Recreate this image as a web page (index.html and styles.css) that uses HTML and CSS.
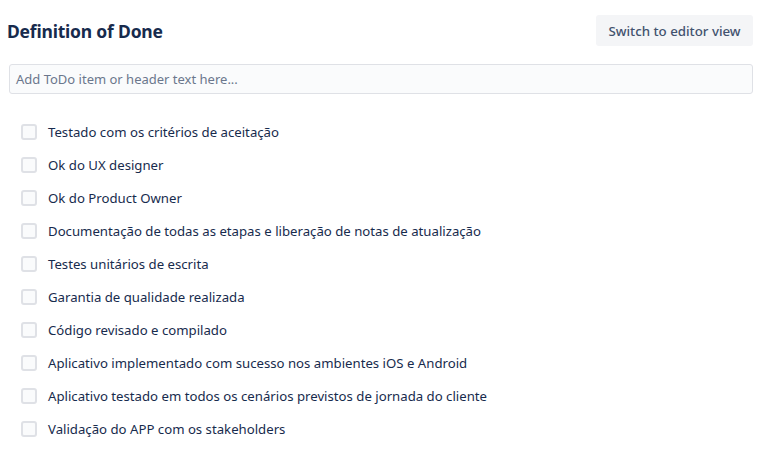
FILE: index.html
```html
<!DOCTYPE html>
<html>
<head>
<meta charset="utf-8">
<link rel="stylesheet" href="styles.css">
</head>
<body>
<div class="page">
  <div class="header">
    <h1 class="title">Definition of Done</h1>
    <button class="switch-btn">Switch to editor view</button>
  </div>
  <div class="add-input">Add ToDo item or header text here...</div>
  <ul class="todo-list">
    <li class="todo"><span class="box"></span><span class="label">Testado com os critérios de aceitação</span></li>
    <li class="todo"><span class="box"></span><span class="label">Ok do UX designer</span></li>
    <li class="todo"><span class="box"></span><span class="label">Ok do Product Owner</span></li>
    <li class="todo"><span class="box"></span><span class="label">Documentação de todas as etapas e liberação de notas de atualização</span></li>
    <li class="todo"><span class="box"></span><span class="label">Testes unitários de escrita</span></li>
    <li class="todo"><span class="box"></span><span class="label">Garantia de qualidade realizada</span></li>
    <li class="todo"><span class="box"></span><span class="label">Código revisado e compilado</span></li>
    <li class="todo"><span class="box"></span><span class="label">Aplicativo implementado com sucesso nos ambientes iOS e Android</span></li>
    <li class="todo"><span class="box"></span><span class="label">Aplicativo testado em todos os cenários previstos de jornada do cliente</span></li>
    <li class="todo"><span class="box"></span><span class="label">Validação do APP com os stakeholders</span></li>
  </ul>
</div>
</body>
</html>
```

FILE: styles.css
```css
html, body {
  margin: 0;
  padding: 0;
  background: #ffffff;
}
body {
  font-family: "Noto Sans", "Open Sans", sans-serif;
  color: #172b4d;
}
.page {
  padding: 15px 22px 0 7px;
}
.header {
  display: flex;
  justify-content: space-between;
  align-items: center;
  height: 31px;
}
.title {
  margin: 0;
  font-size: 17.5px;
  font-weight: 700;
  color: #172b4d;
  letter-spacing: -0.2px;
}
.switch-btn {
  border: none;
  background: #f4f5f7;
  color: #42526e;
  font-family: inherit;
  font-size: 13.3px;
  font-weight: 500;
  height: 31px;
  padding: 0;
  border-radius: 3px;
  width: 157px;
}
.add-input {
  margin: 18px 0 0 2px;
  height: 30px;
  box-sizing: border-box;
  border: 1px solid #dfe1e6;
  border-radius: 3px;
  background: #fafbfc;
  color: #6b778c;
  font-size: 13px;
  padding: 0 6px;
  display: flex;
  align-items: center;
}
.todo-list {
  list-style: none;
  margin: 21px 0 0 0;
  padding: 0 0 0 14px;
}
.todo {
  display: flex;
  align-items: center;
  height: 33px;
  gap: 11px;
  font-size: 13.2px;
}
.box {
  width: 16px;
  height: 16px;
  box-sizing: border-box;
  border: 2px solid #dfe1e6;
  background: #fafbfc;
  border-radius: 3px;
  flex: none;
}
.label {
  color: #172b4d;
}
```
